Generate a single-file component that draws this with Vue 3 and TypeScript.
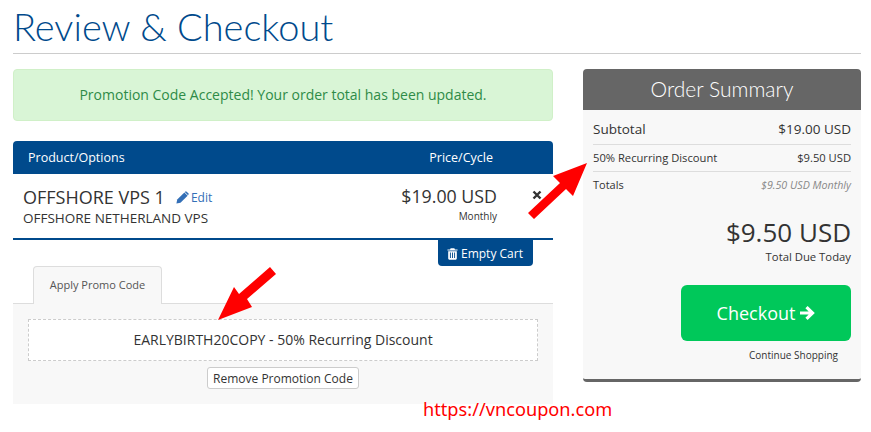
<script setup lang="ts">
interface SummaryRow {
  label: string
  value: string
  kind: string
}

const summaryRows: SummaryRow[] = [
  { label: 'Subtotal', value: '$19.00 USD', kind: 'row-large' },
  { label: '50% Recurring Discount', value: '$9.50 USD', kind: 'row-small' },
  { label: 'Totals', value: '$9.50 USD Monthly', kind: 'row-totals' }
]
</script>

<template>
  <div class="page">
    <h1 class="page-title">Review &amp; Checkout</h1>

    <div class="columns">
      <div class="main-col">
        <div class="alert">Promotion Code Accepted! Your order total has been updated.</div>

        <div class="cart-head">
          <span>Product/Options</span>
          <span class="head-price">Price/Cycle</span>
        </div>
        <div class="cart-row">
          <div class="item-info">
            <div class="item-title">
              <span class="item-name">OFFSHORE VPS 1</span>
              <a class="item-edit">
                <svg class="icon-pencil" viewBox="0 0 16 16" width="13" height="13">
                  <path d="M0.500 15.500l1-5 8.800-8.800 4 4L5.500 14.500z" fill="#336fb7" />
                  <path d="M11.300 .8a1.300 1.300 0 0 1 1.800 0l2.100 2.100a1.300 1.300 0 0 1 0 1.800l-.4.400-4-4z" fill="#336fb7" />
                </svg>
                Edit
              </a>
            </div>
            <div class="item-group">OFFSHORE NETHERLAND VPS</div>
          </div>
          <div class="item-price">
            <div class="price-value">$19.00 USD</div>
            <div class="price-cycle">Monthly</div>
          </div>
          <svg class="item-remove" viewBox="0 0 10 10" width="10" height="10">
            <path d="M1.500 1.500l7 7M8.500 1.500l-7 7" stroke="#333" stroke-width="2.400" />
          </svg>
        </div>

        <div class="cart-actions">
          <button class="empty-btn" type="button">
            <svg viewBox="0 0 12 14" width="11" height="13">
              <path d="M4 1.200h4l.7 1.300h2.800v1.300H.5V2.500h2.800z" fill="#fff" />
              <path fill-rule="evenodd" d="M1.300 4.500h9.400v8a1.200 1.200 0 0 1-1.200 1.200h-7a1.200 1.200 0 0 1-1.200-1.200zM3.200 6v6h1V6zM5.500 6v6h1V6zM7.800 6v6h1V6z" fill="#fff" />
            </svg>
            Empty Cart
          </button>
        </div>

        <div class="promo-tabs">
          <div class="promo-tab">Apply Promo Code</div>
        </div>
        <div class="promo-panel">
          <div class="promo-code">EARLYBIRTH20COPY - 50% Recurring Discount</div>
          <button class="promo-remove" type="button">Remove Promotion Code</button>
        </div>
      </div>

      <aside class="summary">
        <div class="summary-head">Order Summary</div>
        <div class="summary-body">
          <div v-for="row in summaryRows" :key="row.label" class="summary-row" :class="row.kind">
            <span>{{ row.label }}</span>
            <span class="row-value">{{ row.value }}</span>
          </div>
          <div class="total-due">
            <div class="total-amount">$9.50 USD</div>
            <div class="total-label">Total Due Today</div>
          </div>
          <div class="summary-actions">
            <button class="checkout-btn" type="button">
              Checkout
              <svg viewBox="0 0 16 14" width="16" height="14">
                <path d="M1 7h12.500M7.500 1.200L13.500 7l-6 5.800" fill="none" stroke="#fff" stroke-width="3.200" />
              </svg>
            </button>
            <a class="continue-link">Continue Shopping</a>
          </div>
        </div>
      </aside>
    </div>

    <svg class="arrow arrow-summary" viewBox="0 0 75 68" width="75" height="68">
      <path d="M63 8L29 21 36 28 4 58 10 64 42 34 49 41z" fill="#ff0000" />
    </svg>
    <svg class="arrow arrow-promo" viewBox="0 0 75 62" width="75" height="62">
      <path d="M8 58L24 25 29 32 60 5 66 12 37 37 42 45z" fill="#ff0000" />
    </svg>
    <div class="watermark">https://vncoupon.com</div>
  </div>
</template>

<style scoped>
.page {
  position: relative;
  box-sizing: border-box;
  width: 871px;
  height: 432px;
  padding: 0 10px 0 13px;
  overflow: hidden;
  background: #ffffff;
  color: #333333;
  font-family: "Open Sans", "Noto Sans", sans-serif;
}

.page-title {
  margin: 0 0 15px;
  height: 53px;
  border-bottom: 1px solid #cccccc;
  box-sizing: content-box;
  color: #004a8c;
  font-family: Lato, "Open Sans", sans-serif;
  font-size: 38px;
  font-weight: 300;
  line-height: 53px;
}

.columns {
  display: flex;
  gap: 30px;
  align-items: flex-start;
}

.main-col {
  width: 540px;
}

.alert {
  height: 52px;
  box-sizing: border-box;
  margin-bottom: 20px;
  border: 1px solid #d0f0c8;
  border-radius: 4px;
  background: #d9f5d6;
  color: #2e8b47;
  font-size: 14px;
  line-height: 50px;
  text-align: center;
}

.cart-head {
  display: flex;
  justify-content: space-between;
  height: 33px;
  padding: 0 60px 0 15px;
  border-radius: 4px 4px 0 0;
  background: #004a8c;
  color: #ffffff;
  font-size: 12.5px;
  line-height: 33px;
}

.cart-row {
  position: relative;
  display: flex;
  justify-content: space-between;
  height: 64px;
  padding: 0 56px 0 10px;
  border-bottom: 2px solid #004a8c;
}

.item-title {
  display: flex;
  align-items: center;
  gap: 11px;
  margin-top: 11px;
  height: 24px;
}

.item-name {
  font-size: 18px;
}

.item-edit {
  display: flex;
  align-items: center;
  gap: 2px;
  margin-top: 1px;
  color: #336fb7;
  font-size: 12px;
}

.item-group {
  font-size: 13.5px;
  line-height: 18px;
}

.item-price {
  text-align: right;
}

.price-value {
  margin-top: 10px;
  font-size: 17.8px;
  line-height: 24px;
}

.price-cycle {
  margin-top: 1px;
  font-size: 10px;
  line-height: 14px;
}

.item-remove {
  position: absolute;
  top: 16px;
  right: 11px;
}

.cart-actions {
  display: flex;
  justify-content: flex-end;
  padding-right: 20px;
}

.empty-btn {
  display: flex;
  align-items: center;
  gap: 3px;
  height: 26px;
  width: 95px;
  padding: 0 0 0 9px;
  border: none;
  border-radius: 0 0 4px 4px;
  background: #004a8c;
  color: #ffffff;
  font-family: inherit;
  font-size: 12px;
}

.promo-tabs {
  height: 37px;
  padding-left: 20px;
}

.promo-tab {
  position: relative;
  box-sizing: border-box;
  width: 129px;
  height: 38px;
  border: 1px solid #dddddd;
  border-bottom: none;
  border-radius: 4px 4px 0 0;
  background: #f8f8f8;
  color: #555555;
  font-size: 11px;
  line-height: 35px;
  text-align: center;
}

.promo-panel {
  display: flex;
  flex-direction: column;
  align-items: center;
  box-sizing: border-box;
  height: 101px;
  padding: 15px 15px 0;
  border-top: 1px solid #dddddd;
  background: #f8f8f8;
}

.promo-code {
  box-sizing: border-box;
  width: 100%;
  height: 42px;
  border: 1px dashed #cccccc;
  background: #ffffff;
  font-size: 14px;
  line-height: 40px;
  text-align: center;
}

.promo-remove {
  height: 22px;
  margin-top: 6px;
  padding: 0 5px;
  border: 1px solid #cccccc;
  border-radius: 3px;
  background: #ffffff;
  color: #333333;
  font-family: inherit;
  font-size: 12px;
}

.summary {
  width: 278px;
}

.summary-head {
  height: 41px;
  border-radius: 4px 4px 0 0;
  background: #666666;
  color: #ffffff;
  font-family: Lato, "Open Sans", sans-serif;
  font-size: 21px;
  font-weight: 300;
  line-height: 40px;
  text-align: center;
}

.summary-body {
  box-sizing: border-box;
  height: 272px;
  padding: 5px 10px 0;
  border-bottom: 3px solid #666666;
  border-radius: 0 0 4px 4px;
  background: #f8f8f8;
}

.summary-row {
  display: flex;
  justify-content: space-between;
  align-items: center;
  box-sizing: border-box;
}

.row-large {
  height: 30px;
  padding-bottom: 2px;
  border-bottom: 1px solid #dddddd;
  font-size: 13.5px;
}

.row-small {
  height: 27px;
  padding-bottom: 1px;
  border-bottom: 1px solid #dddddd;
  font-size: 11.2px;
}

.row-totals {
  height: 25px;
  font-size: 11px;
}

.row-totals .row-value {
  color: #888888;
  font-size: 10.7px;
  font-style: italic;
}

.total-due {
  margin-top: 17px;
  text-align: right;
}

.total-amount {
  font-size: 26px;
  line-height: 36px;
}

.total-label {
  font-size: 11.3px;
  line-height: 14px;
}

.summary-actions {
  display: flex;
  flex-direction: column;
  align-items: flex-end;
  margin-top: 21px;
}

.checkout-btn {
  display: flex;
  align-items: center;
  justify-content: center;
  gap: 4px;
  width: 170px;
  height: 56px;
  border: none;
  border-radius: 6px;
  background: #00c85a;
  color: #ffffff;
  font-family: inherit;
  font-size: 18px;
}

.continue-link {
  margin-top: 7px;
  margin-right: 13px;
  font-size: 10px;
  line-height: 14px;
}

.arrow {
  position: absolute;
}

.arrow-summary {
  top: 155px;
  left: 524px;
}

.arrow-promo {
  top: 262px;
  left: 210px;
}

.watermark {
  position: absolute;
  top: 396px;
  left: 423px;
  color: #ff0000;
  font-family: "Noto Sans", sans-serif;
  font-size: 18.2px;
  line-height: 26px;
}
</style>
